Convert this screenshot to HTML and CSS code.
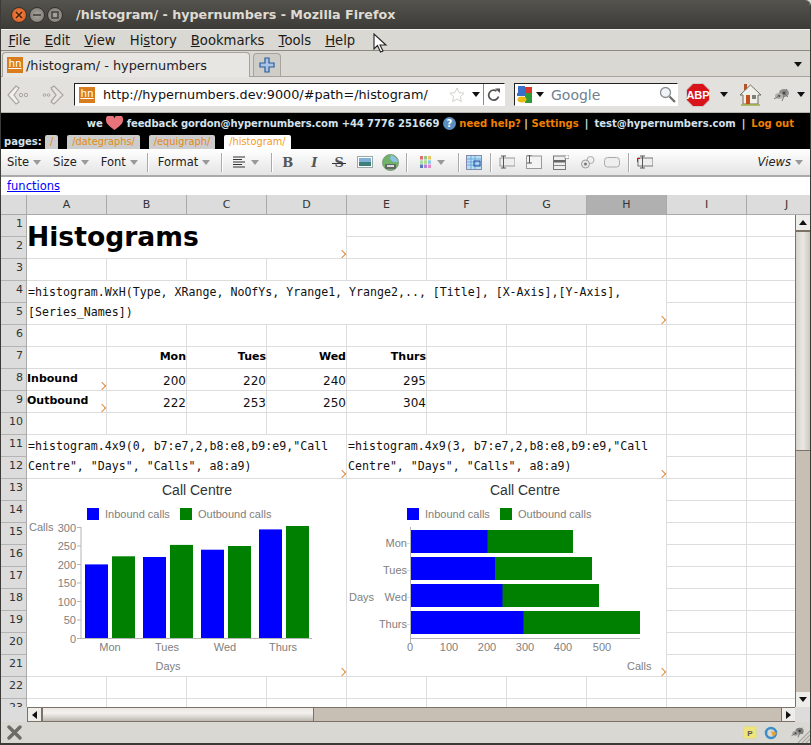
FILE: index.html
```html
<!DOCTYPE html>
<html lang="en">
<head>
    <meta charset="UTF-8">
    <meta name="viewport" content="width=device-width, initial-scale=1.0">
    <title>/histogram/ - hypernumbers - Mozilla Firefox</title>
    <link rel="stylesheet" href="styles.css">
</head>
<body>
<div class="window">
    <div class="titlebar">
        <span class="winbtn close"><svg width="8" height="8" viewBox="0 0 8 8"><path d="M1 1l6 6M7 1l-6 6" stroke="#4a2008" stroke-width="1.5"/></svg></span>
        <span class="winbtn"><svg width="8" height="8" viewBox="0 0 8 8"><path d="M0 4h8" stroke="#3c3b37" stroke-width="1.5"/></svg></span>
        <span class="winbtn"><svg width="8" height="8" viewBox="0 0 8 8"><rect x="1" y="1" width="6" height="6" fill="none" stroke="#3c3b37" stroke-width="1.4"/></svg></span>
        <span class="wintitle">/histogram/ - hypernumbers - Mozilla Firefox</span>
    </div>

    <div class="menubar">
        <span><u>F</u>ile</span>
        <span><u>E</u>dit</span>
        <span><u>V</u>iew</span>
        <span>Hi<u>s</u>tory</span>
        <span><u>B</u>ookmarks</span>
        <span><u>T</u>ools</span>
        <span><u>H</u>elp</span>
    </div>

    <div class="tabbar">
        <div class="tab"><span class="favicon">hn</span>/histogram/ - hypernumbers</div>
        <div class="newtab"><svg width="16" height="16" viewBox="0 0 16 16"><path d="M6 1h4v5h5v4h-5v5H6v-5H1V6h5z" fill="#a9c4e4" stroke="#2a5c9c" stroke-width="1.2"/></svg></div>
        <span class="arrow tabs-arrow"></span>
    </div>

    <div class="navbar">
        <svg class="nav-back" width="22" height="22" viewBox="0 0 22 22"><path d="M9 2L1 11l8 9 3-2-5-7 5-7z" fill="#f2f1ee" stroke="#a9a79f" stroke-width="1.2"/><circle cx="14" cy="11" r="1.7" fill="none" stroke="#a9a79f"/><circle cx="19" cy="11" r="1.7" fill="none" stroke="#a9a79f"/></svg>
        <svg class="nav-forward" width="22" height="22" viewBox="0 0 22 22"><circle cx="2.5" cy="11" r="1.3" fill="none" stroke="#a9a79f"/><circle cx="6.5" cy="11" r="1.3" fill="none" stroke="#a9a79f"/><path d="M12 2l9 9-9 9-3-2 5-7-5-7z" fill="#e8e6e2" stroke="#a9a79f" stroke-width="1.2"/><path d="M9 5l5 6-5 6" fill="none" stroke="#a9a79f"/></svg>
        <div class="urlbar">
            <span class="favicon url-icon">hn</span>
            <span class="url">http://hypernumbers.dev:9000/#path=/histogram/</span>
            <svg class="star" width="16" height="16" viewBox="0 0 16 16"><path d="M8 1l2.1 4.6 5 .6-3.7 3.4 1 5L8 12.1 3.6 14.600l1-5L.9 6.200l5-.6z" fill="#fff" stroke="#d3d1cc"/></svg>
            <span class="arrow url-arrow"></span>
            <span class="reload"><svg width="14" height="14" viewBox="0 0 14 14"><path d="M11.500 8.500A5 5 0 1 1 9.500 3" fill="none" stroke="#55534e" stroke-width="1.700"/><path d="M8 0.500l5 0v4.500z" fill="#55534e"/></svg></span>
        </div>
        <div class="searchbar">
            <svg width="17" height="17" viewBox="0 0 17 17"><rect x="1" y="0" width="7" height="7" fill="#3a6fc9"/><rect x="8" y="1" width="7" height="6" fill="#d9352b"/><rect x="8" y="7" width="7" height="10" fill="#2f9a3a"/><rect x="0" y="7" width="8" height="3" fill="#3a6fc9"/><ellipse cx="5" cy="13.500" rx="4.500" ry="3" fill="#edb913"/></svg>
            <span class="arrow search-arrow"></span>
            <span class="search-text">Google</span>
            <svg class="search-glass" width="17" height="17" viewBox="0 0 17 17"><circle cx="6.500" cy="6.500" r="5" fill="#f1f4f7" stroke="#8b8f92" stroke-width="1.300"/><path d="M10.500 10.500l5.500 5.500" stroke="#6d6d68" stroke-width="2.200"/></svg>
        </div>
        <svg class="abp" width="24" height="24" viewBox="0 0 24 24"><path d="M7 .5h10L23.500 7v10L17 23.500H7L.5 17V7z" fill="#d8141a" stroke="#ccc"/><text x="12" y="16" class="abp-text" text-anchor="middle">ABP</text></svg>
        <span class="arrow abp-arrow"></span>
        <svg class="home" width="23" height="23" viewBox="0 0 23 23"><rect x="5" y="1" width="3" height="6" fill="#b5522a"/><path d="M11.500 2L1 12h3v9h15v-9h3z" fill="#f1efe9" stroke="#6f6d62"/><rect x="7" y="12" width="4" height="9" fill="#c2501c"/><rect x="13" y="12" width="4" height="4" fill="#7b8079"/><path d="M2 22h19" stroke="#9aae3c" stroke-width="1.500"/></svg>
        <svg class="bug" width="18" height="16" viewBox="0 0 18 16"><ellipse cx="11" cy="6" rx="5" ry="4" fill="#8f8f8b"/><ellipse cx="6" cy="9" rx="4" ry="3" fill="#b0b0ac"/><circle cx="11" cy="6" r="1.500" fill="#444"/><circle cx="6" cy="9" r="1.300" fill="#555"/><path d="M1 12l5-3M9 14l2-5M15 10l-3-3M14 2l-2 3" stroke="#777"/></svg>
        <span class="arrow bug-arrow"></span>
    </div>

    <div class="hn-top">
        <div class="hn-links">we <svg class="heart" width="17" height="14" viewBox="0 0 17 14"><path d="M8.500 14C3 10 0 7.500 0 4a4 4 0 0 1 8.500-1.500A4 4 0 0 1 17 4c0 3.500-3 6-8.500 10z" fill="#e8737a"/></svg> <span class="hn-contact">feedback gordon@hypernumbers.com +44 7776 251669</span> <span class="help-icon">?</span> <a class="hn-link">need help?</a> | <a class="hn-link">Settings</a><span class="pipe">|</span>test@hypernumbers.com<span class="pipe">|</span><a class="hn-link">Log out</a></div>
        <div class="hn-pages">
            <span class="pages-label">pages:</span>
            <a class="page-tab first">/</a>
            <a class="page-tab">/dategraphs/</a>
            <a class="page-tab">/equigraph/</a>
            <a class="page-tab current">/histogram/</a>
        </div>
    </div>

    <div class="toolbar">
        <span class="tool t-site">Site<i class="tool-arrow"></i></span>
        <span class="tool t-size">Size<i class="tool-arrow"></i></span>
        <span class="tool t-font">Font<i class="tool-arrow"></i></span>
        <b class="sep s1"></b>
        <span class="tool t-format">Format<i class="tool-arrow"></i></span>
        <b class="sep s2"></b>
        <span class="tool t-align"><svg width="12" height="12" viewBox="0 0 12 12"><path d="M0 1h12M0 3.500h9M0 6h12M0 8.500h9M0 11h12" stroke="#333"/></svg><i class="tool-arrow"></i></span>
        <b class="sep s3"></b>
        <span class="glyph g-b">B</span>
        <span class="glyph g-i">I</span>
        <span class="glyph g-s">S</span>
        <svg class="t-image" width="16" height="12" viewBox="0 0 16 12"><rect x=".5" y=".5" width="15" height="11" fill="#fff" stroke="#9aa"/><rect x="2" y="2" width="12" height="4" fill="#7fb0d8"/><rect x="2" y="6" width="12" height="4" fill="#3f7f7a"/></svg>
        <svg class="t-globe" width="17" height="17" viewBox="0 0 17 17"><circle cx="8.500" cy="8.500" r="8" fill="#6fb36a" stroke="#7d9a7a"/><path d="M9 1c3 1 6 3 7 7l-5 0-3-3z" fill="#8ec2e8"/><rect x="3" y="10" width="11" height="5" rx="1" fill="#666"/><rect x="5" y="11" width="7" height="2" fill="#ddd"/></svg>
        <b class="sep s4"></b>
        <svg class="t-colors" width="11" height="12" viewBox="0 0 11 12"><rect width="3" height="3.500" fill="#e36c6c"/><rect x="4" width="3" height="3.500" fill="#8fc98f"/><rect x="8" width="3" height="3.500" fill="#e8c85c"/><rect y="4.300" width="3" height="3.500" fill="#a8dca8"/><rect x="4" y="4.300" width="3" height="3.500" fill="#b8d88c"/><rect x="8" y="4.300" width="3" height="3.500" fill="#88c8e8"/><rect y="8.500" width="3" height="3.500" fill="#5878b8"/><rect x="4" y="8.500" width="3" height="3.500" fill="#b088d8"/><rect x="8" y="8.500" width="3" height="3.500" fill="#e888c8"/></svg>
        <i class="tool-arrow t-colors-arrow"></i>
        <b class="sep s5"></b>
        <svg class="t-table" width="16" height="15" viewBox="0 0 16 15"><rect x=".5" y=".5" width="15" height="14" fill="#b8e0f4" stroke="#88a"/><path d="M1 4h14M1 7h14M1 10h14M5 1v13M9 1v13" stroke="#6aa8dc"/><rect x="8" y="6" width="6" height="5" fill="none" stroke="#2a4a9c"/></svg>
        <b class="sep s6"></b>
        <svg class="t-ic1" width="16" height="14" viewBox="0 0 16 14"><rect x="1" y="3" width="15" height="8" fill="#eee" stroke="#999"/><path d="M2 1h5M4.500 1v12M2 13h5" stroke="#555"/></svg>
        <svg class="t-ic2" width="16" height="14" viewBox="0 0 16 14"><rect x=".5" y="1" width="15" height="12.500" fill="#f3f3f3" stroke="#999"/><path d="M1 0h5M3.500 0v8M1 8h5" stroke="#555"/></svg>
        <svg class="t-ic3" width="16" height="15" viewBox="0 0 16 15"><rect x=".5" y="1" width="12" height="13.500" fill="#eee" stroke="#777"/><rect x="1" y="5" width="11" height="2.500" fill="#666"/><rect x="12" y="0" width="4" height="3.500" fill="#fff" stroke="#aaa"/><path d="M1 10.500h11" stroke="#888"/></svg>
        <svg class="t-ic4" width="14" height="13" viewBox="0 0 14 13"><circle cx="9.500" cy="4" r="3.500" fill="#f0f0f0" stroke="#aaa"/><circle cx="4.500" cy="8" r="4" fill="#e8e8e8" stroke="#999"/><circle cx="4.500" cy="8" r="1.500" fill="#777"/></svg>
        <svg class="t-ic5" width="16" height="11" viewBox="0 0 16 11"><rect x=".5" y=".5" width="15" height="9.500" rx="3" fill="#eee" stroke="#aaa"/></svg>
        <b class="sep s7"></b>
        <svg class="t-ic6" width="16" height="14" viewBox="0 0 16 14"><rect x="1" y="3" width="15" height="8" fill="#eee" stroke="#777"/><path d="M3 1h5M5.500 1v12M3 13h5" stroke="#555"/><path d="M0 3h3v1H1v3H0z" fill="#e01010"/></svg>
        <span class="tool t-views"><em>Views</em><i class="tool-arrow"></i></span>
    </div>

    <div class="funcs"><a href="#">functions</a></div>

    <div class="colheads">
        <div class="corner"></div>
        <div class="colhead">A</div>
        <div class="colhead">B</div>
        <div class="colhead">C</div>
        <div class="colhead">D</div>
        <div class="colhead">E</div>
        <div class="colhead">F</div>
        <div class="colhead">G</div>
        <div class="colhead active">H</div>
        <div class="colhead">I</div>
        <div class="colhead">J</div>
    </div>

    <div class="sheet">
        <div class="rowheads">
            <div>1</div><div>2</div><div>3</div><div>4</div><div>5</div><div>6</div>
            <div>7</div><div>8</div><div>9</div><div>10</div><div>11</div><div>12</div>
            <div>13</div><div>14</div><div>15</div><div>16</div><div>17</div><div>18</div>
            <div>19</div><div>20</div><div>21</div><div>22</div><div>23</div>
        </div>
        <div class="cells">
            <div class="merged m-title mark"><h1>Histograms</h1></div>
            <div class="merged m-usage mark mono">=histogram.WxH(Type, XRange, NoOfYs, Yrange1, Yrange2,.., [Title], [X-Axis],[Y-Axis],<br>[Series_Names])</div>

            <div class="head r7 c2">Mon</div>
            <div class="head r7 c3">Tues</div>
            <div class="head r7 c4">Wed</div>
            <div class="head r7 c5">Thurs</div>
            <div class="label r8 c1 mark">Inbound</div>
            <div class="num r8 c2">200</div>
            <div class="num r8 c3">220</div>
            <div class="num r8 c4">240</div>
            <div class="num r8 c5">295</div>
            <div class="label r9 c1 mark">Outbound</div>
            <div class="num r9 c2">222</div>
            <div class="num r9 c3">253</div>
            <div class="num r9 c4">250</div>
            <div class="num r9 c5">304</div>

            <div class="merged m-f1 mark mono">=histogram.4x9(0, b7:e7,2,b8:e8,b9:e9,"Call Centre", "Days", "Calls", a8:a9)</div>
            <div class="merged m-f2 mark mono">=histogram.4x9(3, b7:e7,2,b8:e8,b9:e9,"Call Centre", "Days", "Calls", a8:a9)</div>

            <div class="merged m-c1 mark">
                <svg class="chart" width="319" height="197" viewBox="27 479 319 197">
                    <text x="197" y="495" class="c-title" text-anchor="middle">Call Centre</text>
                    <rect x="87" y="508" width="12" height="12" fill="#00f"/>
                    <text x="105" y="518" class="c-text">Inbound calls</text>
                    <rect x="180" y="508" width="12" height="12" fill="#008000"/>
                    <text x="198" y="518" class="c-text">Outbound calls</text>
                    <text x="29" y="531" class="c-text">Calls</text>
                    <path d="M81 527v111M77 527.500h4M77 546h4M77 564.500h4M77 583h4M77 601.500h4M77 620h4M77 638.500h235" class="c-axis"/>
                    <g class="c-tick" text-anchor="end">
                        <text x="76" y="532">300</text><text x="76" y="550">250</text><text x="76" y="569">200</text>
                        <text x="76" y="587">150</text><text x="76" y="606">100</text><text x="76" y="624">50</text><text x="76" y="643">0</text>
                    </g>
                    <g fill="#00f">
                        <rect x="85" y="564.400" width="23" height="73.600"/><rect x="143" y="557" width="23" height="81"/>
                        <rect x="201" y="549.700" width="23" height="88.300"/><rect x="259" y="529.400" width="23" height="108.600"/>
                    </g>
                    <g fill="#008000">
                        <rect x="112" y="556.300" width="23" height="81.700"/><rect x="170" y="544.900" width="23" height="93.100"/>
                        <rect x="228" y="546" width="23" height="92"/><rect x="286" y="526" width="23" height="112"/>
                    </g>
                    <g class="c-tick" text-anchor="middle">
                        <text x="110" y="651">Mon</text><text x="167" y="651">Tues</text><text x="225" y="651">Wed</text><text x="283" y="651">Thurs</text>
                        <text x="168" y="670">Days</text>
                    </g>
                </svg>
            </div>
            <div class="merged m-c2 mark">
                <svg class="chart" width="319" height="197" viewBox="347 479 319 197">
                    <text x="525" y="495" class="c-title" text-anchor="middle">Call Centre</text>
                    <rect x="407" y="508" width="12" height="12" fill="#00f"/>
                    <text x="425" y="518" class="c-text">Inbound calls</text>
                    <rect x="500" y="508" width="12" height="12" fill="#008000"/>
                    <text x="518" y="518" class="c-text">Outbound calls</text>
                    <path d="M410.500 527v116M410 638.500h230" class="c-axis"/>
                    <path d="M407 543.500h3M407 570.500h3M407 597.500h3M407 624.500h3" class="c-axis light"/>
                    <g class="c-tick" text-anchor="end">
                        <text x="407" y="547">Mon</text><text x="407" y="574">Tues</text><text x="407" y="601">Wed</text><text x="407" y="628">Thurs</text>
                    </g>
                    <text x="349" y="601" class="c-text">Days</text>
                    <g fill="#008000">
                        <rect x="487" y="530" width="86" height="23"/><rect x="495" y="557" width="97" height="23"/>
                        <rect x="502" y="584" width="97" height="23"/><rect x="523" y="611" width="117" height="23"/>
                    </g>
                    <g fill="#00f">
                        <rect x="411" y="530" width="76.500" height="23"/><rect x="411" y="557" width="84" height="23"/>
                        <rect x="411" y="584" width="91.500" height="23"/><rect x="411" y="611" width="112.500" height="23"/>
                    </g>
                    <g class="c-tick" text-anchor="middle">
                        <text x="410" y="651">0</text><text x="449" y="651">100</text><text x="487" y="651">200</text>
                        <text x="525" y="651">300</text><text x="563" y="651">400</text><text x="602" y="651">500</text>
                    </g>
                    <text x="627" y="670" class="c-text">Calls</text>
                </svg>
            </div>
        </div>
        <div class="vscroll">
            <div class="sbtn"><i class="tri up"></i></div>
            <div class="vthumb"></div>
            <div class="sbtn sbtn-down"><i class="tri down"></i></div>
        </div>
    </div>

    <div class="hscroll">
        <div class="hs-blank"></div>
        <div class="sbtn"><i class="tri left"></i></div>
        <div class="hthumb"></div>
        <div class="htrack"></div>
        <div class="sbtn"><i class="tri right"></i></div>
        <div class="hs-corner"></div>
    </div>

    <div class="statusbar">
        <svg width="15" height="15" viewBox="0 0 15 15"><path d="M2 2l11 11M13 2L2 13" stroke="#6e6c66" stroke-width="3.400" stroke-linecap="round"/></svg>
        <svg class="st-p" width="14" height="13" viewBox="0 0 14 13"><rect x=".5" y=".5" width="13" height="12" fill="#efe47a" stroke="#dcd9a8"/><text x="7" y="9.500" class="st-letter" text-anchor="middle">P</text></svg>
        <svg class="st-sync" width="14" height="14" viewBox="0 0 14 14"><circle cx="7" cy="7" r="5" fill="none" stroke="#3a8ec8" stroke-width="2.500"/><path d="M7 5l6 2-4 4z" fill="#e8a030"/></svg>
        <svg class="st-bug" width="16" height="13" viewBox="0 0 18 16"><ellipse cx="11" cy="6" rx="5" ry="4" fill="#7f7f7b"/><ellipse cx="6" cy="9" rx="4" ry="3" fill="#a0a09c"/><circle cx="11" cy="6" r="1.500" fill="#333"/><circle cx="6" cy="9" r="1.300" fill="#444"/><path d="M1 12l5-3M9 14l2-5M15 10l-3-3M14 2l-2 3" stroke="#666"/></svg>
        <svg class="grip" width="13" height="13" viewBox="0 0 13 13"><path d="M13 1L1 13M13 5L5 13M13 9l-4 4" stroke="#a8a69e" stroke-width="1.200"/></svg>
    </div>

    <svg class="cursor" width="15" height="20" viewBox="0 0 15 20"><path d="M1 1v15l3.500-3.500L7.500 19l2.500-1-3-6h6z" fill="#fff" stroke="#222" stroke-width="1.100"/></svg>
</div>
</body>
</html>
```
FILE: styles.css
```css
html, body {
    margin: 0;
    padding: 0;
    height: 745px;
    overflow: hidden;
    background: #dad8d3;
}
body {
    font-family: "DejaVu Sans", sans-serif;
    font-size: 11px;
    color: #222;
}
.window {
    position: relative;
    display: flex;
    flex-direction: column;
    width: 811px;
    height: 745px;
    box-sizing: border-box;
    border-left: 1px solid #3c3b37;
    border-right: 1px solid #3c3b37;
    border-bottom: 2px solid #3c3b37;
    overflow: hidden;
    border-top-right-radius: 6px;
}

/* window chrome */
.titlebar {
    display: flex;
    align-items: center;
    flex: none;
    height: 29px;
    margin: 0 -1px;
    padding-left: 11px;
    gap: 2px;
    background: linear-gradient(#55534e, #3c3b37);
}
.winbtn {
    display: flex;
    align-items: center;
    justify-content: center;
    width: 16px;
    height: 16px;
    border-radius: 50%;
    background: radial-gradient(#a8a69f, #77756e);
    border: 1px solid #33322e;
    box-sizing: border-box;
}
.winbtn.close {
    background: radial-gradient(#f08a4a, #d8541c);
}
.wintitle {
    margin-left: 11px;
    font-size: 12.7px;
    font-weight: bold;
    color: #dfdbd2;
}
.menubar {
    display: flex;
    align-items: center;
    flex: none;
    height: 22px;
    padding-left: 7.5px;
    gap: 14.1px;
    font-size: 13.2px;
    color: #1c1b18;
    background: #dad8d3;
    border-top: 1px solid #f2f1ee;
    border-bottom: 1px solid #8c8a83;
    box-sizing: border-box;
}
.tabbar {
    display: flex;
    align-items: flex-end;
    flex: none;
    height: 26px;
    padding-left: 1px;
    background: #dad8d3;
    border-bottom: 1px solid #a5a39c;
    box-sizing: border-box;
}
.tab {
    display: flex;
    align-items: center;
    width: 248px;
    height: 25px;
    margin-bottom: -1px;
    padding-left: 4px;
    box-sizing: border-box;
    font-size: 12.9px;
    color: #222;
    background: #e8e6e2;
    border: 1px solid #a5a39c;
    border-bottom: none;
    border-radius: 4px 4px 0 0;
    position: relative;
}
.favicon {
    display: inline-block;
    flex: none;
    width: 16px;
    height: 16px;
    margin-right: 3px;
    font-family: "Liberation Mono", monospace;
    font-size: 11px;
    line-height: 15px;
    text-align: center;
    text-decoration: underline;
    color: #fff;
    background: #d97c1e;
}
.newtab {
    display: flex;
    align-items: center;
    justify-content: center;
    width: 28px;
    height: 23px;
    margin-left: 3px;
    box-sizing: border-box;
    background: #cfcdc7;
    border: 1px solid #a5a39c;
    border-bottom: none;
    border-radius: 4px 4px 0 0;
}
.arrow {
    display: inline-block;
    flex: none;
    width: 0;
    height: 0;
    border-left: 4px solid transparent;
    border-right: 4px solid transparent;
    border-top: 5px solid #111;
}
.tabs-arrow {
    margin: 0 8px 9px auto;
}
.navbar {
    display: flex;
    align-items: center;
    flex: none;
    height: 36px;
    padding-left: 6px;
    box-sizing: border-box;
    background: #e3e1dd;
    border-bottom: 1px solid #b5b3ac;
}
.nav-forward {
    margin-left: 13px;
}
.urlbar {
    display: flex;
    align-items: center;
    width: 431px;
    height: 23px;
    margin-left: 10px;
    box-sizing: border-box;
    background: #fff;
    border: 1px solid #fff;
    border-top-color: #222;
    border-left-color: #222;
}
.url-icon {
    margin-left: 4px;
}
.url {
    margin-left: 5px;
    font-size: 12.8px;
    color: #111;
    white-space: nowrap;
}
.star {
    margin-left: auto;
}
.url-arrow {
    margin-left: 7px;
}
.reload {
    display: flex;
    align-items: center;
    justify-content: center;
    width: 20px;
    height: 100%;
    margin-left: 3px;
    border-left: 1px solid #8c8a83;
}
.searchbar {
    display: flex;
    align-items: center;
    width: 164px;
    height: 23px;
    margin-left: 9px;
    padding-left: 2px;
    box-sizing: border-box;
    background: #fff;
    border: 1px solid #fff;
    border-top-color: #222;
    border-left-color: #222;
}
.search-arrow {
    margin-left: 2px;
}
.search-text {
    margin-left: 7px;
    font-size: 14px;
    color: #71818f;
}
.search-glass {
    margin-left: auto;
    margin-right: 1px;
}
.abp {
    margin-left: 8px;
}
.abp-text {
    font-family: "Liberation Sans", sans-serif;
    font-size: 11px;
    font-weight: bold;
    fill: #fff;
}
.abp-arrow {
    margin-left: 10px;
}
.home {
    margin-left: 11px;
}
.bug {
    margin-left: 11px;
}
.bug-arrow {
    margin-left: 6px;
}

/* hypernumbers page */
.hn-top {
    flex: none;
    height: 36px;
    color: #d4e2ee;
    background: #000;
    font-size: 10px;
    font-weight: bold;
}
.hn-links {
    height: 22px;
    padding-right: 16px;
    line-height: 22px;
    text-align: right;
    white-space: nowrap;
}
.hn-contact {
    letter-spacing: -0.08px;
}
.pipe {
    margin: 0 6px;
}
.heart {
    vertical-align: -3px;
}
.help-icon {
    display: inline-block;
    width: 13px;
    height: 13px;
    border-radius: 50%;
    line-height: 13px;
    text-align: center;
    color: #fff;
    background: #5b8fc0;
}
.hn-link {
    color: #f08000;
}
.hn-pages {
    display: flex;
    align-items: flex-end;
    height: 14px;
    padding-left: 3px;
}
.pages-label {
    width: 41px;
    line-height: 14px;
}
.page-tab {
    height: 14px;
    margin-right: 9px;
    padding: 0 5px;
    line-height: 14px;
    font-weight: normal;
    font-size: 9.8px;
    color: #e58a12;
    background: #ccc;
    border-radius: 2px 2px 0 0;
}
.page-tab.current {
    color: #f59a1a;
    background: #fff;
}
.toolbar {
    display: flex;
    align-items: center;
    flex: none;
    height: 28px;
    padding-left: 6px;
    box-sizing: border-box;
    font-size: 11.5px;
    color: #222;
    background: linear-gradient(#fff, #e4e4e4);
    border-bottom: 2px solid #aaa;
}
.tool {
    display: flex;
    align-items: center;
    gap: 4px;
}
.tool-arrow {
    display: inline-block;
    width: 0;
    height: 0;
    border-left: 4px solid transparent;
    border-right: 4px solid transparent;
    border-top: 5px solid #999;
}
.sep {
    width: 1px;
    height: 19px;
    background: #aaa;
    box-shadow: 1px 0 0 #fff;
}
.glyph {
    position: relative;
    font-family: "DejaVu Serif", serif;
    font-size: 13px;
    color: #555;
    font-weight: bold;
}
.t-size { margin-left: 12px; }
.t-font { margin-left: 12px; }
.s1 { margin-left: 9px; }
.t-format { margin-left: 10px; }
.s2 { margin-left: 11px; }
.t-align { margin-left: 11px; gap: 6px; }
.s3 { margin-left: 12px; }
.g-b { margin-left: 10px; }
.g-i { margin-left: 18px; font-style: italic; }
.g-s { margin-left: 17px; }
.g-s::after {
    content: "";
    position: absolute;
    left: -2px;
    right: -2px;
    top: 8px;
    height: 1px;
    background: #333;
}
.t-image { margin-left: 13px; }
.t-globe { margin-left: 9px; }
.s4 { margin-left: 7px; }
.t-colors { margin-left: 13px; }
.t-colors-arrow { margin-left: 6px; }
.s5 { margin-left: 13px; }
.t-table { margin-left: 7px; }
.s6 { margin-left: 8px; }
.t-ic1 { margin-left: 8px; }
.t-ic2 { margin-left: 11px; }
.t-ic3 { margin-left: 11px; }
.t-ic4 { margin-left: 12px; }
.t-ic5 { margin-left: 9px; }
.s7 { margin-left: 8px; }
.t-ic6 { margin-left: 8px; }
.t-views { margin-left: auto; margin-right: 7px; }
.t-views em { font-style: italic; }
.funcs {
    flex: none;
    height: 18px;
    padding-left: 6px;
    line-height: 18px;
    font-size: 11.5px;
    background: #fff;
}
.funcs a {
    color: #00f;
}

/* spreadsheet */
.colheads {
    display: flex;
    flex: none;
    height: 20px;
    box-sizing: border-box;
    background: #dcdcdc;
    border-bottom: 1px solid #aaa;
}
.corner {
    flex: none;
    width: 25px;
}
.colhead {
    flex: none;
    width: 80px;
    box-sizing: border-box;
    text-align: center;
    line-height: 19px;
    color: #333;
    border-left: 1px solid #aaa;
}
.colhead.active {
    background: #b0b0b0;
}
.sheet {
    display: flex;
    flex: none;
    height: 492px;
    overflow: hidden;
}
.rowheads {
    flex: none;
    width: 26px;
    box-sizing: border-box;
    background: #dcdcdc;
    border-right: 1px solid #aaa;
}
.rowheads div {
    height: 22px;
    box-sizing: border-box;
    padding-right: 3px;
    text-align: right;
    line-height: 18px;
    color: #333;
    border-bottom: 1px solid #b4b4b4;
}
.cells {
    display: grid;
    flex: none;
    grid-template-columns: repeat(10, 80px);
    grid-auto-rows: 22px;
    width: 768px;
    overflow: hidden;
    background-color: #fff;
    background-image:
        linear-gradient(to right, transparent 79px, #ddd 79px),
        linear-gradient(to bottom, transparent 21px, #ddd 21px);
    background-size: 80px 22px;
}
.merged {
    background: #fff;
    border-right: 1px solid #ddd;
    border-bottom: 1px solid #ddd;
    box-sizing: border-box;
    min-width: 0;
}
.mark {
    position: relative;
}
.mark::after {
    content: "";
    position: absolute;
    right: 1px;
    bottom: 1px;
    width: 5px;
    height: 5px;
    border-top: 1px solid #e08a3c;
    border-right: 1px solid #e08a3c;
    transform: rotate(45deg);
}
.label.mark::after {
    right: 2px;
    bottom: 2px;
}
.m-title { grid-column: 1 / 5; grid-row: 1 / 3; }
.m-usage { grid-column: 1 / 9; grid-row: 4 / 6; }
.m-f1 { grid-column: 1 / 5; grid-row: 11 / 13; }
.m-f2 { grid-column: 5 / 9; grid-row: 11 / 13; }
.m-c1 { grid-column: 1 / 5; grid-row: 13 / 22; }
.m-c2 { grid-column: 5 / 9; grid-row: 13 / 22; }
.r7 { grid-row: 7; }
.r8 { grid-row: 8; }
.r9 { grid-row: 9; }
.c1 { grid-column: 1; }
.c2 { grid-column: 2; }
.c3 { grid-column: 3; }
.c4 { grid-column: 4; }
.c5 { grid-column: 5; }
h1 {
    margin: 0;
    font-size: 26.6px;
    line-height: 44px;
    font-weight: bold;
    color: #000;
}
.mono {
    padding: 1px 0 0 1px;
    font-family: "DejaVu Sans Mono", monospace;
    font-size: 11.6px;
    line-height: 20px;
    color: #111;
}
.head {
    padding-right: 1px;
    text-align: right;
    font-weight: bold;
    line-height: 20px;
    color: #000;
}
.num {
    padding-right: 1px;
    text-align: right;
    font-size: 12px;
    line-height: 24px;
    color: #111;
}
.label {
    font-weight: bold;
    line-height: 19px;
    color: #000;
}
.chart {
    display: block;
    font-family: "Liberation Sans", sans-serif;
}
.c-title {
    font-size: 14px;
    fill: #333;
}
.c-text, .c-tick {
    font-size: 11px;
    fill: #808080;
}
.c-axis {
    fill: none;
    stroke: #b5b5b5;
}
.c-axis.light {
    stroke: #ddd;
}

/* scrollbars */
.vscroll {
    display: flex;
    flex-direction: column;
    flex: none;
    width: 15px;
    box-sizing: border-box;
    background: #c8bfb4;
    border-left: 1px solid #7b7166;
}
.sbtn {
    display: flex;
    align-items: center;
    justify-content: center;
    flex: none;
    width: 14px;
    height: 15px;
    box-sizing: border-box;
    background: #efedea;
}
.sbtn-down {
    margin-top: auto;
}
.vthumb {
    flex: none;
    height: 221px;
    box-sizing: border-box;
    background: linear-gradient(to right, #d6d2cb, #ebe7e3 50%, #cbc7c0);
    border-top: 2px solid #7b7166;
    border-bottom: 1px solid #7b7166;
}
.hscroll {
    display: flex;
    flex: none;
    height: 15px;
    box-sizing: border-box;
}
.hs-blank {
    flex: none;
    width: 26px;
    background: #dcdcdc;
}
.hscroll .sbtn {
    border-top: 1px solid #7b7166;
    border-bottom: 1px solid #7b7166;
    border-left: 1px solid #7b7166;
}
.hthumb {
    flex: none;
    width: 273px;
    box-sizing: border-box;
    background: linear-gradient(#ebe7e3, #f4f1ee 40%, #bdb8b0);
    border-top: 1px solid #7b7166;
    border-bottom: 1px solid #7b7166;
    border-left: 2px solid #7b7166;
    border-right: 1px solid #7b7166;
}
.htrack {
    flex: none;
    width: 467px;
    box-sizing: border-box;
    background: #c8bfb4;
    border-top: 1px solid #7b7166;
    border-bottom: 1px solid #7b7166;
}
.hs-corner {
    flex: 1;
    background: #dcdcdc;
}
.tri {
    display: block;
    width: 0;
    height: 0;
}
.tri.up {
    border-left: 4px solid transparent;
    border-right: 4px solid transparent;
    border-bottom: 5px solid #111;
}
.tri.down {
    border-left: 4px solid transparent;
    border-right: 4px solid transparent;
    border-top: 5px solid #111;
}
.tri.left {
    border-top: 4px solid transparent;
    border-bottom: 4px solid transparent;
    border-right: 5px solid #111;
}
.tri.right {
    border-top: 4px solid transparent;
    border-bottom: 4px solid transparent;
    border-left: 5px solid #111;
}
.statusbar {
    display: flex;
    align-items: center;
    flex: 1;
    padding-left: 6px;
    background: #dad8d3;
    position: relative;
}
.st-p { margin-left: auto; }
.st-sync { margin-left: 7px; }
.st-bug { margin-left: 12px; margin-right: 4px; }
.st-letter {
    font-family: "Liberation Sans", sans-serif;
    font-size: 8px;
    font-weight: bold;
    fill: #555;
}
.grip {
    position: absolute;
    right: 0;
    bottom: 0;
}
.cursor {
    position: absolute;
    left: 372px;
    top: 33px;
}
```
